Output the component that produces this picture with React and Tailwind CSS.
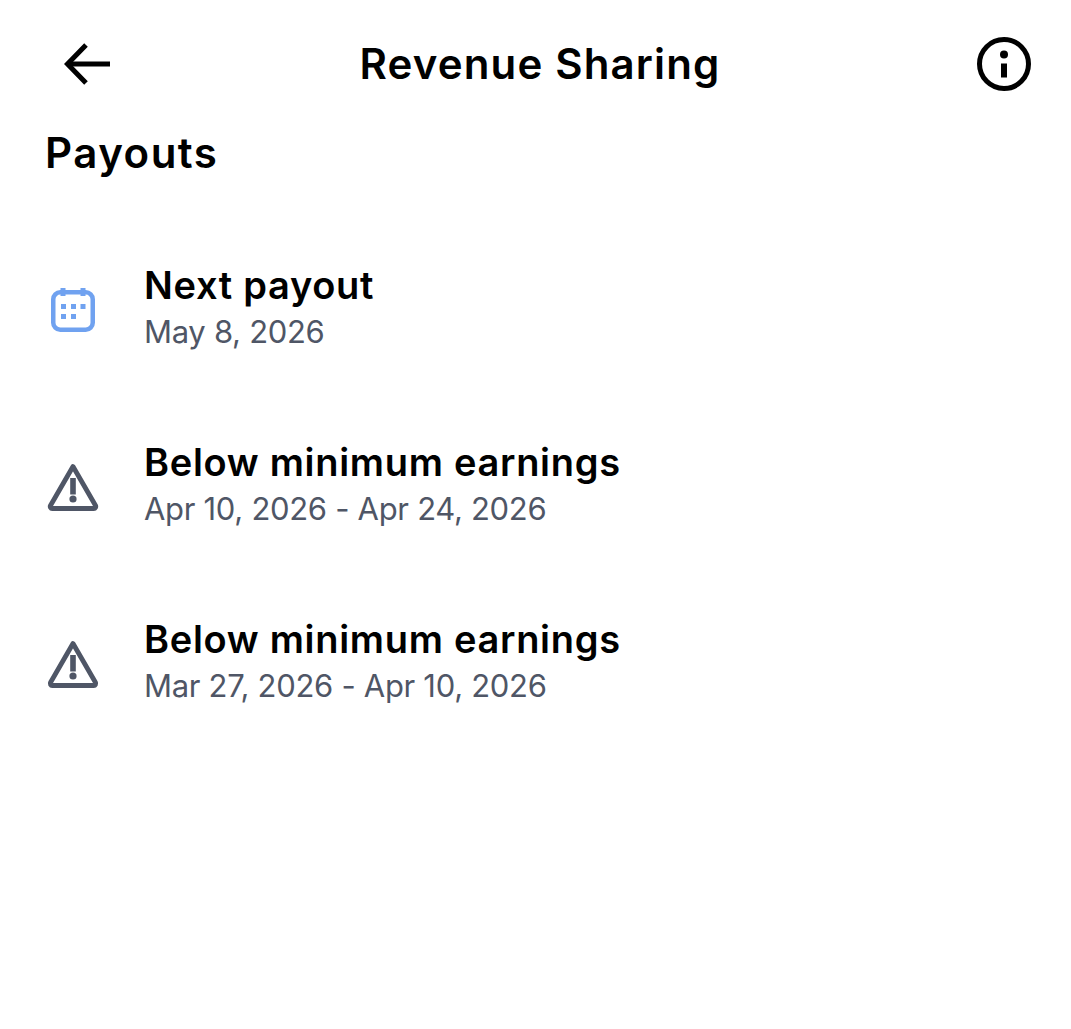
const rows = [
    { title: 'Next payout', sub: 'May 8, 2026', icon: 'calendar' },
    { title: 'Below minimum earnings', sub: 'Apr 10, 2026 - Apr 24, 2026', icon: 'warn' },
    { title: 'Below minimum earnings', sub: 'Mar 27, 2026 - Apr 10, 2026', icon: 'warn' },
];

const BackIcon = () => (
    <svg width="52" height="44" viewBox="0 0 52 44" fill="none">
        <path d="M50 22H8" stroke="black" strokeWidth="5" />
        <path d="M26 3 7.5 22 26 41" stroke="black" strokeWidth="5" />
    </svg>
);

const CalendarIcon = () => (
    <svg width="54" height="54" viewBox="0 0 54 54" fill="none">
        <rect x="8.25" y="9.25" width="39.5" height="37.5" rx="7" stroke="#70a2f0" strokeWidth="4.5" />
        <path d="M18 5v8M38 5v8" stroke="#70a2f0" strokeWidth="5" />
        <g fill="#70a2f0">
            <rect x="16" y="21" width="5" height="5" />
            <rect x="26" y="21" width="5" height="5" />
            <rect x="35.5" y="21" width="5" height="5" />
            <rect x="16" y="31" width="5" height="5" />
            <rect x="26" y="31" width="5" height="5" />
        </g>
    </svg>
);

const WarnIcon = () => (
    <svg width="54" height="54" viewBox="0 0 54 54" fill="none">
        <path d="M28 6.5 L50.5 45.5 a2 2 0 0 1 -1.7 3 H7.2 a2 2 0 0 1 -1.7 -3 Z" stroke="#4f5666" strokeWidth="4.8" strokeLinejoin="round" />
        <rect x="25.2" y="18" width="5.6" height="16.5" fill="#4f5666" />
        <circle cx="28" cy="39" r="3.6" fill="#4f5666" />
    </svg>
);

export default function App() {
    return (
        <div className="w-[1071px] h-[1029px] bg-white font-['Inter',sans-serif] text-black overflow-hidden">
            <div className="flex items-center justify-between h-[127px] pl-[60px] pr-[39px]">
                <BackIcon />
                <h1 className="-ml-[8px] text-[42px] font-semibold tracking-[1.15px]">Revenue Sharing</h1>
                <svg width="56" height="56" viewBox="0 0 56 56" fill="none">
                    <circle cx="28" cy="28" r="24.5" stroke="black" strokeWidth="5" />
                    <circle cx="28" cy="18.5" r="4" fill="black" />
                    <rect x="25" y="27.5" width="6" height="14" fill="black" />
                </svg>
            </div>
            <h2 className="px-[45px] text-[42px] leading-[52px] font-semibold tracking-[1.5px]">Payouts</h2>
            <div className="flex flex-col gap-[77px] mt-[78px] px-[45px]">
                {rows.map((r, i) => (
                    <div key={i} className="flex items-center h-[100px]">
                        <div className="w-[99px] shrink-0 pt-[6px]">
                            {r.icon === 'calendar' ? <CalendarIcon /> : <WarnIcon />}
                        </div>
                        <div>
                            <div className="text-[38px] leading-[50px] font-semibold tracking-[0.7px]">{r.title}</div>
                            <div className="text-[31px] leading-[44px] tracking-[-0.3px] text-[#4f5666]">{r.sub}</div>
                        </div>
                    </div>
                ))}
            </div>
        </div>
    );
}
